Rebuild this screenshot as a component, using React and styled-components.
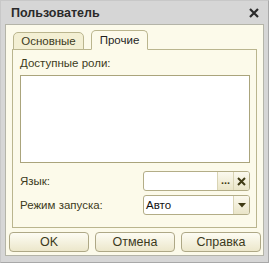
import React from 'react';
import styled, { createGlobalStyle } from 'styled-components';

const Global = createGlobalStyle`
  html, body { margin: 0; padding: 0; background: #fff; }
  body { font-family: "Liberation Sans", Arial, sans-serif; }
`;

function App() {
  return (
    <>
      <Global />
      <Window>
        <TitleBar>
          <Title>Пользователь</Title>
          <Close viewBox="0 0 10 10">
            <path d="M1 1 L9 9 M9 1 L1 9" stroke="#2b2b2b" strokeWidth="2.2" />
          </Close>
        </TitleBar>
        <Body>
          <Tabs>
            <Tab width={71}>Основные</Tab>
            <Tab width={57} active>Прочие</Tab>
          </Tabs>
          <Panel>
            <Label>Доступные роли:</Label>
            <List />
            <Row>
              <RowLabel>Язык:</RowLabel>
              <Field>
                <FieldText />
                <FieldButton dots>...</FieldButton>
                <FieldButton>
                  <svg width="9" height="9" viewBox="0 0 9 9">
                    <path d="M1 1 L8 8 M8 1 L1 8" stroke="#3f3a14" strokeWidth="2" />
                  </svg>
                </FieldButton>
              </Field>
            </Row>
            <Row>
              <RowLabel>Режим запуска:</RowLabel>
              <Field>
                <FieldText>Авто</FieldText>
                <FieldButton>
                  <svg width="8" height="5" viewBox="0 0 8 5">
                    <path d="M0 0 H8 L4 4.5 Z" fill="#3f3a14" />
                  </svg>
                </FieldButton>
              </Field>
            </Row>
          </Panel>
          <Buttons>
            <Button>OK</Button>
            <Button>Отмена</Button>
            <Button>Справка</Button>
          </Buttons>
        </Body>
      </Window>
    </>
  );
}

export default App;

const Window = styled.div`
  width: 269px;
  height: 263px;
  box-sizing: border-box;
  background: #d6d6d6;
  border: 1px solid #a8a8a8;
  border-left-color: #c8c8c8;
  border-top-color: #c8c8c8;
  display: flex;
  flex-direction: column;
`;

const TitleBar = styled.div`
  height: 23px;
  display: flex;
  align-items: center;
  justify-content: space-between;
  padding: 0 9px 0 10px;
`;

const Title = styled.div`
  font-weight: bold;
  font-size: 12.5px;
  color: #2a2a2a;
`;

const Close = styled.svg`
  width: 10px;
  height: 10px;
`;

const Body = styled.div`
  flex: 1;
  margin: 0 4px 6px 4px;
  background: #fcfaea;
  border: 1px solid #b4b4a8;
  display: flex;
  flex-direction: column;
  padding: 5px 6px 0 6px;
`;

const Tabs = styled.div`
  display: flex;
  align-items: flex-end;
  gap: 7px;
  padding-left: 1px;
  height: 20px;
  position: relative;
  z-index: 1;
`;

const Tab = styled.div`
  width: ${p => p.width}px;
  height: ${p => (p.active ? '20px' : '18px')};
  box-sizing: border-box;
  display: flex;
  align-items: center;
  justify-content: center;
  font-size: 11.5px;
  color: ${p => (p.active ? '#1f1f1f' : '#3c3a1c')};
  background: ${p => (p.active ? '#fcfaea' : '#f3efd3')};
  border: 1px solid #bab58e;
  border-bottom: ${p => (p.active ? '1px solid #fcfaea' : '1px solid #bab58e')};
  border-radius: 5px 5px 0 0;
`;

const Panel = styled.div`
  margin-top: -1px;
  height: 179px;
  box-sizing: border-box;
  border: 1px solid #bab58e;
  padding: 7px 6px 0 7px;
  display: flex;
  flex-direction: column;
`;

const Label = styled.div`
  font-size: 11.5px;
  line-height: 13px;
  color: #3c3a1c;
`;

const RowLabel = styled(Label)`
  flex: 1;
`;

const List = styled.div`
  margin-top: 5px;
  height: 88px;
  box-sizing: border-box;
  background: #fff;
  border: 1px solid #aaa47c;
  margin-bottom: 8px;
`;

const Row = styled.div`
  display: flex;
  align-items: center;
  height: 20px;
  margin-bottom: 4px;
`;

const Field = styled.div`
  width: 107px;
  height: 20px;
  box-sizing: border-box;
  background: #fff;
  border: 1px solid #b3ad87;
  border-radius: 3px;
  display: flex;
  overflow: hidden;
`;

const FieldText = styled.div`
  flex: 1;
  font-size: 11.5px;
  color: #111;
  padding-left: 2px;
  display: flex;
  align-items: center;
`;

const FieldButton = styled.div`
  width: 16px;
  display: flex;
  align-items: ${p => (p.dots ? 'flex-end' : 'center')};
  justify-content: center;
  padding-bottom: ${p => (p.dots ? '4px' : '0')};
  box-sizing: border-box;
  border-left: 1px solid #d9d4b4;
  background: linear-gradient(#fbf9ee, #eae5c8);
  font-size: 11px;
  font-weight: bold;
  color: #3f3a14;
  line-height: 1;
`;

const Buttons = styled.div`
  display: flex;
  gap: 6px;
  margin: 4px -4px 0 -3px;
`;

const Button = styled.div`
  flex: 1;
  height: 20px;
  box-sizing: border-box;
  border: 1px solid #aea886;
  border-radius: 4px;
  background: linear-gradient(#fdfcf3, #ece7cb);
  display: flex;
  align-items: center;
  justify-content: center;
  font-size: 12.5px;
  color: #3c3a1c;
`;
